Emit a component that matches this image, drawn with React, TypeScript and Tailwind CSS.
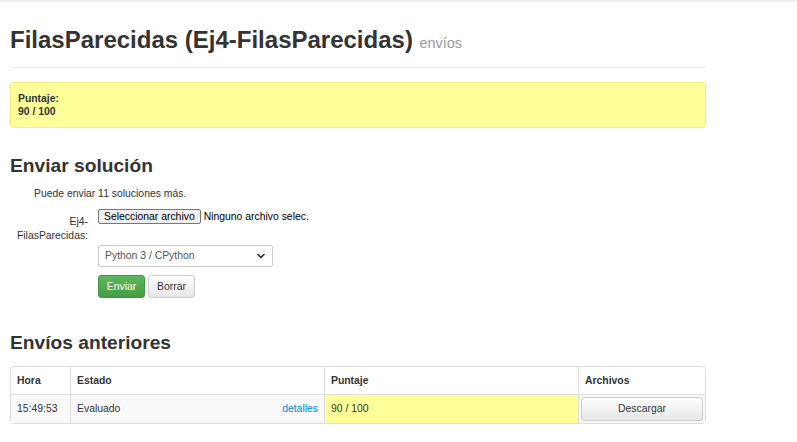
import { ChevronDown } from 'lucide-react'

const font = { fontFamily: '"Liberation Sans", Arial, sans-serif' }

export default function App() {
  return (
    <div className="min-h-[442px] bg-white text-[#333] text-[10.4px] leading-[14px] border-t-2 border-[#eee]" style={font}>
      <div className="w-[696px] ml-[10px]">
        {/* Header */}
        <div className="pt-[24px] pb-[10px] border-b border-[#eee]">
          <h1 className="text-[24px] leading-[28px] font-bold">
            FilasParecidas (Ej4-FilasParecidas){' '}
            <small className="text-[14.4px] font-normal text-[#999]">envíos</small>
          </h1>
        </div>

        {/* Score */}
        <div className="mt-[14px] h-[46px] bg-[#ffff99] border border-[#efef80] rounded-[3px] px-[7px] pt-[9px] font-bold leading-[13px]">
          <div>Puntaje:</div>
          <div>90 / 100</div>
        </div>

        {/* Submit */}
        <h2 className="mt-[27px] text-[19.2px] leading-[22px] font-bold">Enviar solución</h2>
        <div className="mt-[10px] pl-[24px]">Puede enviar 11 soluciones más.</div>

        <div className="mt-[8px] flex">
          <div className="w-[78px] text-right pt-[6px]">
            <div>Ej4-</div>
            <div>FilasParecidas:</div>
          </div>
          <div className="ml-[10px] flex flex-col">
            <div className="flex items-center h-[15px]">
              <button className="h-[15px] px-[5px] border border-[#767676] bg-[#efefef] rounded-[2px] leading-[13px] text-black">
                Seleccionar archivo
              </button>
              <span className="ml-[3px] text-black">Ninguno archivo selec.</span>
            </div>
            <div className="mt-[21px] w-[175px] h-[22px] border border-[#ccc] rounded-[2px] flex items-center justify-between pl-[6px] pr-[5px] text-[#555]">
              <span>Python 3 / CPython</span>
              <ChevronDown className="w-[12px] h-[12px] text-[#333]" strokeWidth={3.5} />
            </div>
            <div className="mt-[8px] flex gap-[3px]">
              <button className="w-[47px] h-[23px] rounded-[3px] text-white border border-[#419641] bg-gradient-to-b from-[#5cb85c] to-[#449d44]">
                Enviar
              </button>
              <button className="w-[47px] h-[23px] rounded-[3px] text-[#333] border border-[#ccc] bg-gradient-to-b from-white to-[#e6e6e6]">
                Borrar
              </button>
            </div>
          </div>
        </div>

        {/* Previous */}
        <h2 className="mt-[34px] text-[19.2px] leading-[22px] font-bold">Envíos anteriores</h2>
        <table className="mt-[12px] w-full border-separate border-spacing-0 border border-[#ddd] rounded-[4px]">
          <thead>
            <tr className="h-[27px]">
              <th className="w-[59px] text-left font-bold px-[6px]">Hora</th>
              <th className="w-[254px] text-left font-bold px-[6px] border-l border-[#ddd]">Estado</th>
              <th className="w-[254px] text-left font-bold px-[6px] border-l border-[#ddd]">Puntaje</th>
              <th className="text-left font-bold px-[6px] border-l border-[#ddd]">Archivos</th>
            </tr>
          </thead>
          <tbody>
            <tr className="h-[29px] bg-[#f9f9f9]">
              <td className="px-[6px] border-t border-[#ddd]">15:49:53</td>
              <td className="px-[6px] border-t border-l border-[#ddd]">
                <div className="flex justify-between">
                  <span>Evaluado</span>
                  <span className="text-[#0088cc]">detalles</span>
                </div>
              </td>
              <td className="px-[6px] border-t border-l border-[#ddd] bg-[#ffff99]">90 / 100</td>
              <td className="px-[2px] border-t border-l border-[#ddd]">
                <button className="w-full h-[24px] rounded-[3px] border border-[#ccc] bg-gradient-to-b from-white to-[#e6e6e6] text-[#333]">
                  Descargar
                </button>
              </td>
            </tr>
          </tbody>
        </table>
      </div>
    </div>
  )
}
